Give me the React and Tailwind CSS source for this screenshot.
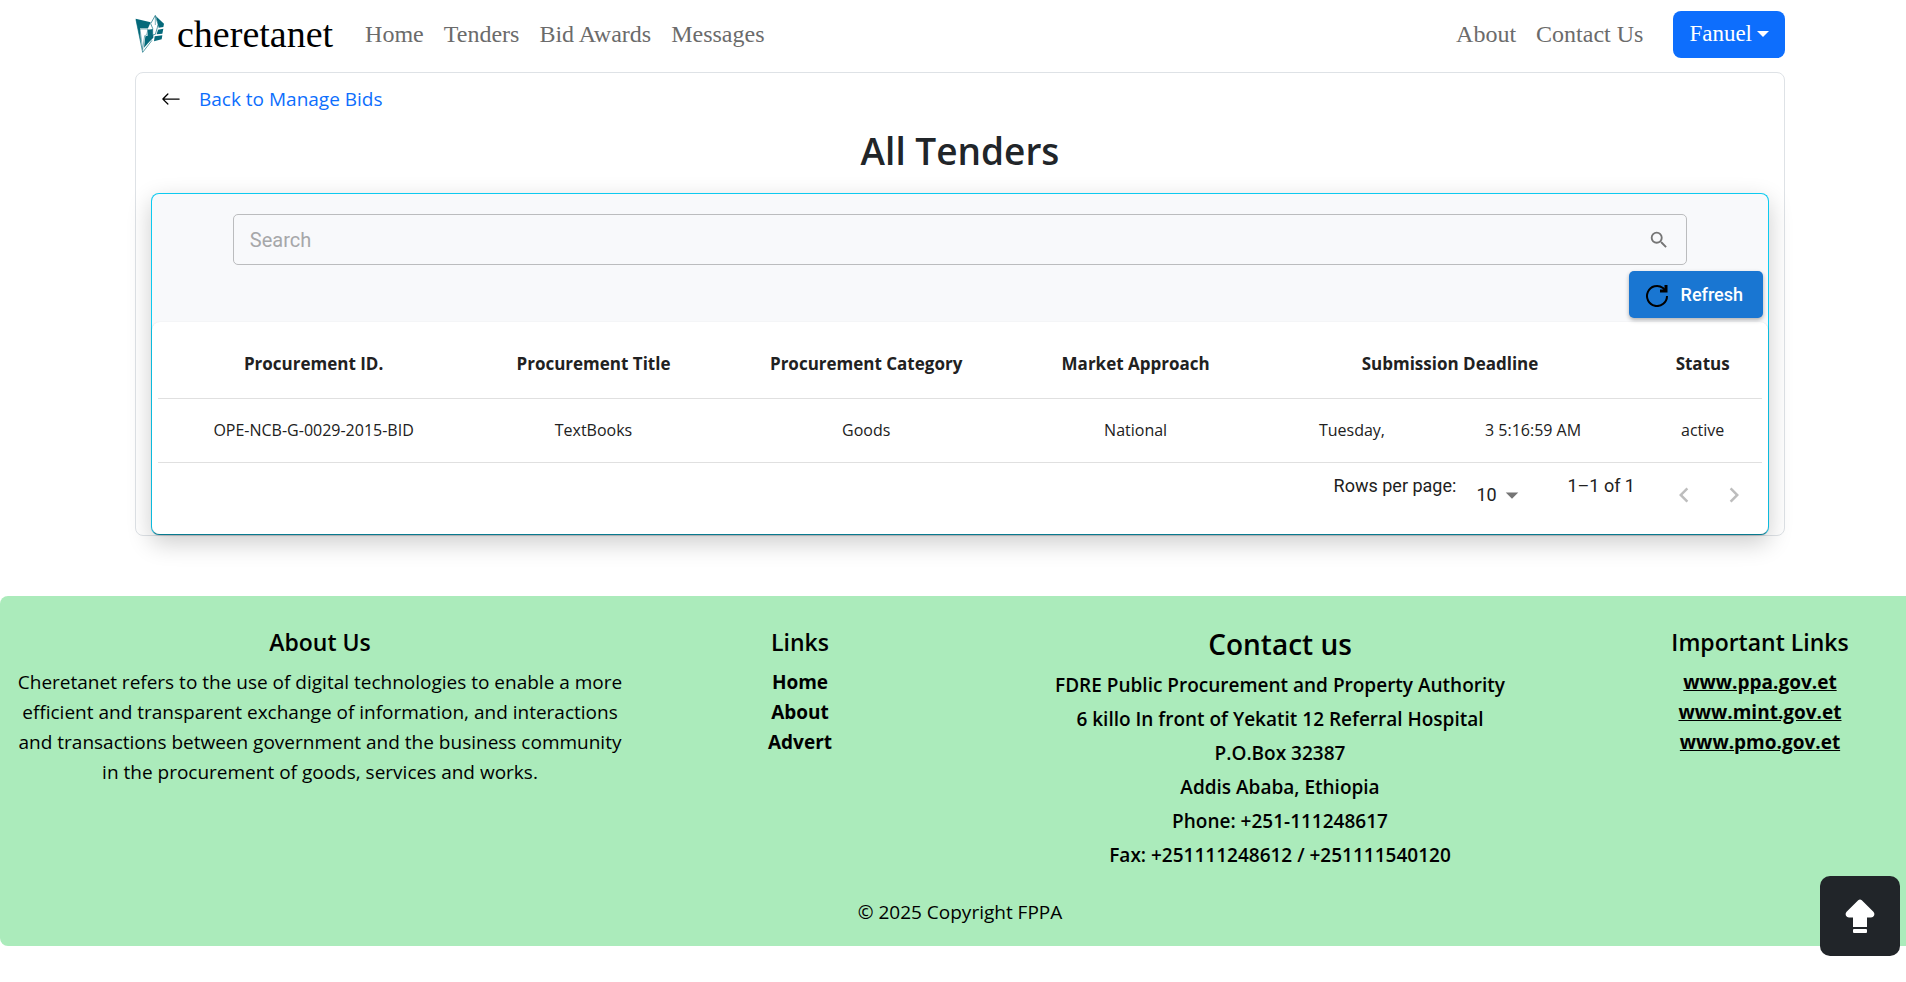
import { BsArrowLeft } from "react-icons/bs";
import { MdSearch, MdArrowDropDown, MdChevronLeft, MdChevronRight } from "react-icons/md";

const columns = [
  { label: "Procurement ID.", width: "w-[19.4%]" },
  { label: "Procurement Title", width: "w-[15.5%]" },
  { label: "Procurement Category", width: "w-[18.5%]" },
  { label: "Market Approach", width: "w-[15.1%]" },
  { label: "Submission Deadline", width: "w-[24.1%]" },
  { label: "Status", width: "w-[7.4%]" },
];

function Logo() {
  return (
    <svg viewBox="0 0 88 114" className="h-[38px] w-[30px]" aria-hidden="true">
      <path d="M1 11 L46 22 L38 40 L14 40 L17 86 Z" fill="#04697a" />
      <path d="M2 14 L22 112 L50 76" fill="none" stroke="#04697a" strokeWidth="2" />
      <path d="M14 42 L38 42 L34 60 L28 62 L22 104 Z" fill="#fff" stroke="#04697a" strokeWidth="1.5" />
      <path d="M37 44 L54 42 L54 68 L42 80 L26 98 L30 64 L37 62 Z" fill="#04697a" />
      <path d="M62 4 L86 26 L84 36 L70 38 Z" fill="#04697a" />
      <path d="M68 44 L84 41 L81 56 L64 58 Z" fill="#04697a" />
      <path d="M58 64 L81 61 L79 73 L56 79 Z" fill="#04697a" />
      <path d="M60 1 L46 26 L52 40 L52 60 L60 58 L66 38 L68 28 Z" fill="#fff" stroke="#04697a" strokeWidth="2" />
      <path d="M60 3 V30" stroke="#04697a" strokeWidth="1.5" />
    </svg>
  );
}

function RefreshIcon() {
  return (
    <svg viewBox="0 0 24 24" className="size-6" fill="none" stroke="#000" strokeWidth="2" aria-hidden="true">
      <path d="M22 13 A10 10 0 1 1 18 5 L21 8" />
      <path d="M21 2 V8 H15" strokeWidth="3" />
    </svg>
  );
}

function NavLink({ children }) {
  return (
    <a href="#" className="text-[#6b6b6b]">
      {children}
    </a>
  );
}

export default function App() {
  return (
    <div className="overflow-x-hidden bg-white font-['Open_Sans',sans-serif] text-[19px] leading-[30px] text-[#212529]">
      <div className="-mr-3.5">
        <div className="mx-[135px]">
          <header className="flex h-[72px] items-center justify-between pb-1 font-['Liberation_Serif',serif] text-2xl">
            <div className="flex items-center">
              <a href="#" className="mr-8 flex items-center gap-3 text-[38px] text-black">
                <Logo />
                cheretanet
              </a>
              <nav className="flex gap-5">
                <NavLink>Home</NavLink>
                <NavLink>Tenders</NavLink>
                <NavLink>Bid Awards</NavLink>
                <NavLink>Messages</NavLink>
              </nav>
            </div>
            <div className="flex items-center gap-5">
              <NavLink>About</NavLink>
              <NavLink>Contact Us</NavLink>
              <button className="ml-2.5 flex h-[47px] items-center gap-[5px] rounded-lg bg-[#0d6efd] px-4 text-[23px] text-white">
                Fanuel
                <svg viewBox="0 0 12 6" className="h-1.5 w-3" fill="currentColor" aria-hidden="true">
                  <path d="M0 0 H12 L6 6 Z" />
                </svg>
              </button>
            </div>
          </header>

          <main className="rounded-lg border border-[#dee2e6] px-[15px]">
            <a href="#" className="mt-[11px] ml-2.5 inline-flex items-center gap-[18px] text-[#0d6efd]">
              <BsArrowLeft className="size-5 text-black" />
              Back to Manage Bids
            </a>
            <h1 className="mt-2.5 mb-[18px] text-center text-[37px] leading-12 font-semibold">All Tenders</h1>

            <section className="rounded-lg border border-[#0dcaf0] border-b-[#0b9db8] bg-[#f8f9fb] shadow-[0_8px_24px_rgba(0,0,0,0.2)]">
              <div className="mx-auto w-[90%] pt-5">
                <label className="flex h-[51px] items-center rounded-[5px] border border-[#bbbcbe] px-4 font-['Roboto',sans-serif] text-xl">
                  <input
                    type="text"
                    aria-label="Search"
                    placeholder="Search"
                    className="min-w-0 flex-1 bg-transparent outline-none placeholder:text-[#a6a7a9]"
                  />
                  <MdSearch className="size-[22px] text-[#757575]" />
                </label>
              </div>
              <div className="flex justify-end pt-1.5 pr-[5px] pb-1">
                <button className="flex h-[47px] items-center gap-3 rounded-[5px] bg-[#1976d2] pr-5 pl-4 font-['Roboto',sans-serif] text-lg font-medium text-white shadow-[0_2px_4px_rgba(0,0,0,0.3)]">
                  <RefreshIcon />
                  Refresh
                </button>
              </div>

              <div className="rounded-lg bg-white px-1.5 shadow-[0_1px_2px_rgba(0,0,0,0.3)]">
                <table className="w-full table-fixed text-center text-[#212121]">
                  <thead>
                    <tr className="h-[76px] border-b border-[#e0e0e0] text-[17px]">
                      {columns.map((column) => (
                        <th key={column.label} scope="col" className={column.width + " pt-2 font-bold"}>
                          {column.label}
                        </th>
                      ))}
                    </tr>
                  </thead>
                  <tbody>
                    <tr className="h-16 border-b border-[#e0e0e0] text-base">
                      <td>OPE-NCB-G-0029-2015-BID</td>
                      <td>TextBooks</td>
                      <td>Goods</td>
                      <td>National</td>
                      <td>
                        <span className="inline-flex gap-[100px]">
                          <span>Tuesday,</span>
                          <span>3 5:16:59 AM</span>
                        </span>
                      </td>
                      <td>active</td>
                    </tr>
                  </tbody>
                </table>
                <div className="flex h-[71px] justify-end pr-[13px] font-['Roboto',sans-serif] text-lg text-[#212121]">
                  <label htmlFor="rows" className="pt-[9px]">
                    Rows per page:
                  </label>
                  <div className="ml-5 flex h-16 items-center">
                    <select id="rows" className="appearance-none bg-transparent">
                      <option>10</option>
                    </select>
                    <MdArrowDropDown className="size-[30px] text-[#757575]" />
                  </div>
                  <p className="ml-10 pt-[9px]">1–1 of 1</p>
                  <div className="ml-[34px] flex h-16 items-center gap-5 text-[#bdbdbd]">
                    <button aria-label="Previous page" disabled>
                      <MdChevronLeft className="size-[30px]" />
                    </button>
                    <button aria-label="Next page" disabled>
                      <MdChevronRight className="size-[30px]" />
                    </button>
                  </div>
                </div>
              </div>
            </section>
          </main>
        </div>

        <footer className="mt-[60px] rounded-lg bg-[#abebbb] pt-[30px] pb-[19px] text-center text-black">
          <div className="grid grid-cols-12">
            <section className="col-span-4 px-4">
              <h2 className="mb-[9px] text-[23px] leading-8 font-semibold">About Us</h2>
              <p>
                Cheretanet refers to the use of digital technologies to enable a more efficient and transparent
                exchange of information, and interactions and transactions between government and the business
                community in the procurement of goods, services and works.
              </p>
            </section>
            <section className="col-span-2">
              <h2 className="mb-[9px] text-[23px] leading-8 font-semibold">Links</h2>
              <ul className="font-bold">
                <li><a href="#">Home</a></li>
                <li><a href="#">About</a></li>
                <li><a href="#">Advert</a></li>
              </ul>
            </section>
            <section className="col-span-4">
              <h2 className="mb-1.5 text-[28px] leading-9 font-semibold">Contact us</h2>
              <address className="leading-[34px] font-semibold not-italic">
                <p>FDRE Public Procurement and Property Authority</p>
                <p>6 killo In front of Yekatit 12 Referral Hospital</p>
                <p>P.O.Box 32387</p>
                <p>Addis Ababa, Ethiopia</p>
                <p>Phone: +251-111248617</p>
                <p>Fax: +251111248612 / +251111540120</p>
              </address>
            </section>
            <section className="col-span-2">
              <h2 className="mb-[9px] text-[23px] leading-8 font-semibold">Important Links</h2>
              <ul className="font-bold underline">
                <li><a href="#">www.ppa.gov.et</a></li>
                <li><a href="#">www.mint.gov.et</a></li>
                <li><a href="#">www.pmo.gov.et</a></li>
              </ul>
            </section>
          </div>
          <p className="mt-[25px]">© 2025 Copyright FPPA</p>
        </footer>
      </div>

      <button
        aria-label="Back to top"
        className="fixed right-1.5 bottom-[26px] flex size-20 items-center justify-center rounded-[10px] bg-[#212529] text-white"
      >
        <svg viewBox="0 0 30 34" className="h-[34px] w-[30px]" fill="currentColor" aria-hidden="true">
          <path d="M13.200 1.200 Q15 -0.400 16.800 1.200 L28.400 12.700 Q30 14.500 29 16.800 Q28.200 18.500 26 18.500 H22 V28 H8 V18.500 H4 Q1.800 18.500 1 16.800 Q0 14.500 1.600 12.700 Z" />
          <rect x="8" y="30" width="14" height="4" rx="1" />
        </svg>
      </button>
    </div>
  );
}
